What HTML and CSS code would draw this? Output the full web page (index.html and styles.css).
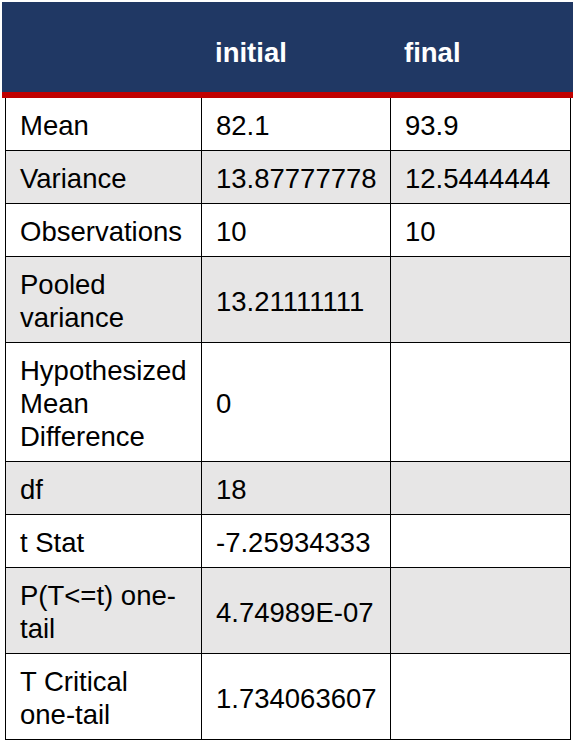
FILE: index.html
```html
<!DOCTYPE html>
<html>
<head>
<meta charset="utf-8">
<link rel="stylesheet" href="styles.css">
</head>
<body>
<div class="page">
  <div class="head">
    <div class="hcell"></div>
    <div class="hcell">initial</div>
    <div class="hcell">final</div>
  </div>
  <table class="stats">
    <colgroup><col class="c1"><col class="c2"><col class="c3"></colgroup>
    <tbody>
      <tr><td>Mean</td><td>82.1</td><td>93.9</td></tr>
      <tr class="alt"><td>Variance</td><td>13.87777778</td><td>12.5444444</td></tr>
      <tr><td>Observations</td><td>10</td><td>10</td></tr>
      <tr class="alt"><td>Pooled<br>variance</td><td>13.21111111</td><td></td></tr>
      <tr><td>Hypothesized<br>Mean<br>Difference</td><td>0</td><td></td></tr>
      <tr class="alt"><td>df</td><td>18</td><td></td></tr>
      <tr><td>t Stat</td><td>-7.25934333</td><td></td></tr>
      <tr class="alt"><td>P(T&lt;=t) one-<br>tail</td><td>4.74989E-07</td><td></td></tr>
      <tr><td>T Critical<br>one-tail</td><td>1.734063607</td><td></td></tr>
    </tbody>
  </table>
</div>
</body>
</html>
```
FILE: styles.css
```css
html, body {
  margin: 0;
  padding: 0;
  background: #ffffff;
}
.page {
  padding: 2px 0 0 2px;
  font-family: "Liberation Sans", Arial, sans-serif;
  font-size: 27.5px;
  line-height: 33px;
  color: #000000;
}
.head {
  display: grid;
  grid-template-columns: 199px 189px 1fr;
  height: 90px;
  background: #203864;
  border-bottom: 6px solid #c00000;
  box-sizing: content-box;
}
.hcell {
  padding: 34px 0 0 14px;
  color: #ffffff;
  font-weight: bold;
}
.stats {
  margin-left: 3px;
  width: 565px;
  border-collapse: collapse;
  table-layout: fixed;
}
.c1 { width: 196px; }
.c2 { width: 189px; }
.c3 { width: 180px; }
.stats td {
  border: 1px solid #000000;
  padding: 11px 6px 8px 14px;
  vertical-align: middle;
  white-space: nowrap;
  overflow: hidden;
}
.stats tr:first-child td {
  border-top: none;
}
.stats tr.alt td {
  background: #e7e6e6;
}
```
